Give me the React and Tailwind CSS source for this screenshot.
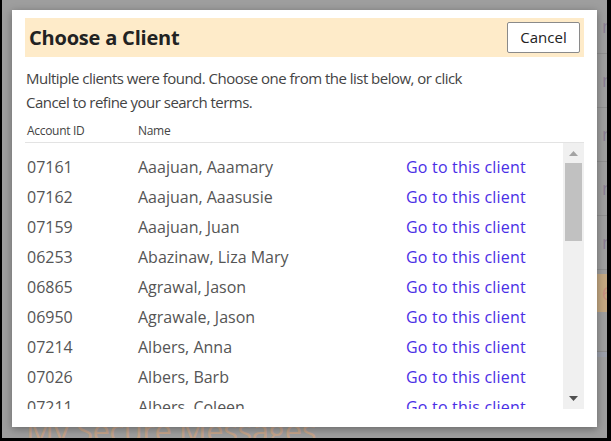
import React from "react";

const clients = [
  ["07161", "Aaajuan, Aaamary"],
  ["07162", "Aaajuan, Aaasusie"],
  ["07159", "Aaajuan, Juan"],
  ["06253", "Abazinaw, Liza Mary"],
  ["06865", "Agrawal, Jason"],
  ["06950", "Agrawale, Jason"],
  ["07214", "Albers, Anna"],
  ["07026", "Albers, Barb"],
  ["07211", "Albers, Coleen"],
  ["07301", "Albers, Dean"],
];

function BackgroundPage() {
  return (
    <div className="absolute inset-0 bg-[#9e9e9e]">
      {/* right-hand list peeking out from behind the dialog */}
      <div className="absolute left-[592px] top-0 w-[40px] flex flex-col">
        {[0, 1, 2, 3, 4].map((i) => (
          <div
            key={i}
            className="h-[54px] border-b border-[#8f8f8f] flex items-center pl-[8px] text-[18px] text-[#8a7f93]"
          >
            n
          </div>
        ))}
        <div className="h-[38px] mt-[4px] bg-[#c4a882] flex items-center pl-[8px] text-[18px] text-[#c98f80]">
          6
        </div>
        <div className="h-[40px] border-b border-[#8f8f8f]" />
        <div className="h-[5px] bg-[#9ca0ab]" />
      </div>
      <div className="absolute left-[24px] top-[407px] text-[31px] tracking-[-0.5px] text-[#c4a48b] whitespace-nowrap">
        My Secure Messages
      </div>
    </div>
  );
}

function Scrollbar() {
  return (
    <div className="w-[21px] h-full bg-[#f0f0f0] flex flex-col items-center">
      <div className="h-[20px] flex items-center justify-center">
        <svg width="9" height="5" viewBox="0 0 9 5">
          <path d="M0 5 L4.5 0 L9 5 Z" fill="#a3a3a3" />
        </svg>
      </div>
      <div className="w-[17px] h-[78px] bg-[#c1c1c1]" />
      <div className="flex-1" />
      <div className="h-[22px] flex items-center justify-center">
        <svg width="9" height="5" viewBox="0 0 9 5">
          <path d="M0 0 L4.5 5 L9 0 Z" fill="#505050" />
        </svg>
      </div>
    </div>
  );
}

export default function App() {
  return (
    <div className="relative w-[611px] h-[441px] overflow-hidden bg-black font-['Open_Sans',sans-serif]">
      <div className="absolute left-[2px] top-0 right-[4px] bottom-[3px] overflow-hidden">
        <BackgroundPage />
        <div className="absolute left-[10px] top-[10px] w-[585px] h-[417px] bg-white shadow-[0_2px_8px_rgba(0,0,0,0.35)] px-[13px] pt-[8px] flex flex-col">
          <div className="h-[39px] bg-[#feebc9] flex items-center justify-between pl-[4px] pr-[4px]">
            <h1 className="text-[20px] font-bold text-[#222] tracking-[-0.2px]">
              Choose a Client
            </h1>
            <button className="w-[73px] h-[31px] bg-white border border-[#8a8a8a] rounded-[2px] text-[15px] text-[#222]">
              Cancel
            </button>
          </div>
          <p className="mt-[9px] text-[15px] leading-[24px] text-[#444] tracking-[-0.52px] pl-[1px]">
            Multiple clients were found. Choose one from the list below, or click
            <br />
            Cancel to refine your search terms.
          </p>
          <div className="mt-[6px] h-[23px] border-b border-[#e3e3e3] flex items-center text-[12px] text-[#444] tracking-[-0.3px]">
            <span className="w-[113px] pl-[2px]">Account ID</span>
            <span>Name</span>
          </div>
          <div className="h-[266px] flex">
            <div className="flex-1 overflow-hidden pt-[9px]">
              {clients.map(([id, name]) => (
                <div
                  key={id}
                  className="h-[30px] flex items-center text-[16px] text-[#555] whitespace-nowrap"
                >
                  <span className="w-[113px] pl-[2px]">{id}</span>
                  <span className="w-[268px]">{name}</span>
                  <a href="#" className="text-[#4a2ee6] tracking-[0.2px]">
                    Go to this client
                  </a>
                </div>
              ))}
            </div>
            <Scrollbar />
          </div>
        </div>
      </div>
    </div>
  );
}
